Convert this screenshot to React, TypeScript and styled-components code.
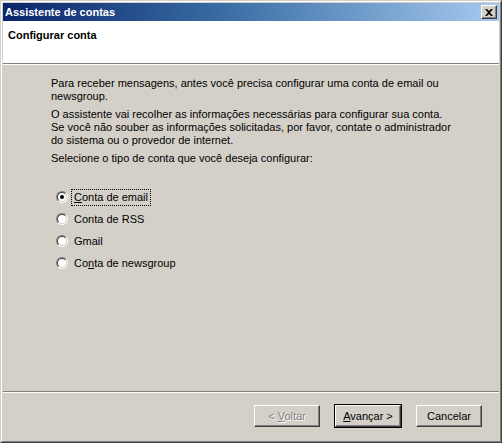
import React from 'react';
import styled, { createGlobalStyle } from 'styled-components';

const GlobalStyle = createGlobalStyle`
  html, body {
    margin: 0;
    padding: 0;
    background: #d4d0c8;
  }
  body {
    font-family: 'Liberation Sans', Arial, sans-serif;
    font-size: 11px;
    color: #000;
  }
`;

const Window = styled.div`
  box-sizing: border-box;
  width: 502px;
  height: 443px;
  border: 1px solid;
  border-color: #d4d0c8 #404040 #404040 #d4d0c8;
  background: #d4d0c8;
`;

const Frame = styled.div`
  box-sizing: border-box;
  height: 100%;
  border: 1px solid;
  border-color: #fff #808080 #808080 #fff;
  padding: 1px;
  display: flex;
  flex-direction: column;
`;

const TitleBar = styled.div`
  height: 18px;
  flex: none;
  display: flex;
  align-items: center;
  justify-content: space-between;
  padding: 0 2px 0 2px;
  background: linear-gradient(to right, #0a246a 0%, #3a6ea5 45%, #a6caf0 100%);
  color: #fff;
  font-weight: bold;
`;

const CloseButton = styled.div`
  box-sizing: border-box;
  width: 16px;
  height: 14px;
  background: #d4d0c8;
  border: 1px solid;
  border-color: #fff #404040 #404040 #fff;
  box-shadow: inset -1px -1px 0 #808080;
  display: flex;
  align-items: center;
  justify-content: center;
  color: #000;
`;

const Header = styled.div`
  height: 43px;
  flex: none;
  background: #fff;
  padding: 8px 0 0 5px;
  box-sizing: border-box;
  font-weight: bold;
  border-bottom: 1px solid #808080;
`;

const Body = styled.div`
  flex: 1;
  border-top: 1px solid #fff;
  padding: 12px 10px 0 48px;
`;

const Para = styled.p`
  margin: 0 0 5px;
  line-height: 13px;
  white-space: nowrap;
`;

const RadioList = styled.div`
  margin-top: 21px;
  margin-left: 5px;
  display: flex;
  flex-direction: column;
`;

const RadioRow = styled.label`
  height: 22px;
  display: flex;
  align-items: center;
  gap: 3px;
`;

const RadioOuter = styled.span`
  box-sizing: border-box;
  width: 12px;
  height: 12px;
  border-radius: 50%;
  border: 1px solid;
  border-color: #808080 #fff #fff #808080;
  display: flex;
`;

const RadioInner = styled.span`
  box-sizing: border-box;
  flex: 1;
  border-radius: 50%;
  border: 1px solid;
  border-color: #404040 #d4d0c8 #d4d0c8 #404040;
  background: #fff;
  display: flex;
  align-items: center;
  justify-content: center;
`;

const Dot = styled.span`
  width: 4px;
  height: 4px;
  border-radius: 50%;
  background: #000;
`;

const Label = styled.span<{ $focus?: boolean }>`
  padding: 1px 2px;
  line-height: 13px;
  border: 1px dotted ${p => (p.$focus ? '#000' : 'transparent')};
`;

const Footer = styled.div`
  height: 49px;
  flex: none;
  border-top: 1px solid #808080;
  box-shadow: inset 0 1px 0 #fff;
  display: flex;
  justify-content: flex-end;
  align-items: flex-start;
  padding: 12px 16px 0 0;
  box-sizing: border-box;
`;

const ButtonGroup = styled.div`
  display: flex;
  gap: 13px;
`;

const Button = styled.div<{ $default?: boolean; $disabled?: boolean }>`
  box-sizing: border-box;
  width: 68px;
  height: 24px;
  display: flex;
  align-items: center;
  justify-content: center;
  border: 1px solid ${p => (p.$default ? '#000' : 'transparent')};
  color: ${p => (p.$disabled ? '#808080' : '#000')};
  text-shadow: ${p => (p.$disabled ? '1px 1px 0 #fff' : 'none')};
  & > span {
    box-sizing: border-box;
    width: 100%;
    height: 100%;
    display: flex;
    align-items: center;
    justify-content: center;
    gap: 3px;
    border: 1px solid;
    border-color: #fff #404040 #404040 #fff;
    box-shadow: inset -1px -1px 0 #808080;
  }
`;

const Ul = styled.u`
  text-decoration: underline;
  text-underline-offset: 1px;
`;

const options = [
  { key: 'email', label: <><Ul>C</Ul>onta de email</>, checked: true },
  { key: 'rss', label: <>Conta de RSS</> },
  { key: 'gmail', label: <>Gmail</> },
  { key: 'news', label: <>Co<Ul>n</Ul>ta de newsgroup</> },
];

export default function App() {
  return (
    <>
      <GlobalStyle />
      <Window>
        <Frame>
          <TitleBar>
            <span>Assistente de contas</span>
            <CloseButton>
              <svg width="8" height="7" viewBox="0 0 8 7">
                <path d="M0 0h2l2 2 2-2h2L5 3.5 8 7H6L4 5 2 7H0l3-3.5z" fill="#000" />
              </svg>
            </CloseButton>
          </TitleBar>
          <Header>Configurar conta</Header>
          <Body>
            <Para>
              Para receber mensagens, antes você precisa configurar uma conta de email ou
              <br />
              newsgroup.
            </Para>
            <Para>
              O assistente vai recolher as informações necessárias para configurar sua conta.
              <br />
              Se você não souber as informações solicitadas, por favor, contate o administrador
              <br />
              do sistema ou o provedor de internet.
            </Para>
            <Para>Selecione o tipo de conta que você deseja configurar:</Para>
            <RadioList>
              {options.map(o => (
                <RadioRow key={o.key}>
                  <RadioOuter>
                    <RadioInner>{o.checked && <Dot />}</RadioInner>
                  </RadioOuter>
                  <Label $focus={o.checked}>{o.label}</Label>
                </RadioRow>
              ))}
            </RadioList>
          </Body>
          <Footer>
            <ButtonGroup>
              <Button $disabled>
                <span>&lt;<span><Ul>V</Ul>oltar</span></span>
              </Button>
              <Button $default>
                <span><span><Ul>A</Ul>vançar</span>&gt;</span>
              </Button>
              <Button>
                <span>Cancelar</span>
              </Button>
            </ButtonGroup>
          </Footer>
        </Frame>
      </Window>
    </>
  );
}
